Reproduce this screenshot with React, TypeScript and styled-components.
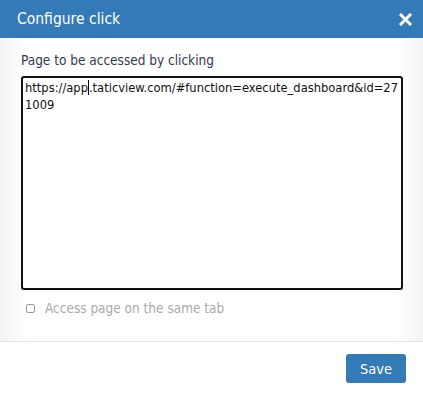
import React from 'react';
import styled, { createGlobalStyle } from 'styled-components';

const GlobalStyle = createGlobalStyle`
  html, body {
    margin: 0;
    padding: 0;
    background: #fff;
  }
  body {
    font-family: "DejaVu Sans Condensed", "DejaVu Sans", sans-serif;
    font-stretch: condensed;
  }
`;

const Modal = styled.div`
  width: 423px;
  height: 397px;
  display: flex;
  flex-direction: column;
  background: #fff;
`;

const Header = styled.header`
  height: 38px;
  background: #337ab7;
  display: flex;
  align-items: center;
  justify-content: space-between;
  padding: 0 11px 0 17px;
  box-sizing: border-box;
`;

const Title = styled.h4`
  margin: 0;
  color: #fff;
  font-size: 15.5px;
  font-weight: normal;
`;

const CloseButton = styled.button`
  background: none;
  border: none;
  padding: 0;
  width: 14px;
  height: 14px;
  display: flex;
  align-items: center;
  justify-content: center;
  cursor: pointer;
`;

const Body = styled.div`
  height: 304px;
  box-sizing: border-box;
  padding: 14px 20px 0 21px;
  border-bottom: 1px solid #e5e5e5;
  background: linear-gradient(
    to right,
    #f4f4f4 0,
    #fff 28px,
    #fff calc(100% - 28px),
    #f4f4f4 100%
  );
  display: flex;
  flex-direction: column;
`;

const Label = styled.label`
  color: #333a4f;
  font-size: 13.5px;
  line-height: 16px;
  margin-bottom: 8px;
`;

const UrlBox = styled.div`
  height: 214px;
  box-sizing: border-box;
  border: 2px solid #111;
  border-radius: 3px;
  background: #fff;
  padding: 1px 2px;
  font-size: 12.8px;
  line-height: 17px;
  color: #111;
  word-break: break-all;
  white-space: pre-wrap;
`;

const Caret = styled.span`
  display: inline-block;
  width: 1px;
  height: 15px;
  vertical-align: -3px;
  background: #000;
`;

const CheckRow = styled.label`
  display: flex;
  align-items: center;
  gap: 10px;
  margin: 10px 0 0 5px;
  color: #aaa;
  font-size: 13.5px;
`;

const Check = styled.span`
  width: 9px;
  height: 9px;
  box-sizing: border-box;
  border: 1px solid #999;
  border-radius: 2px;
  background: #fff;
`;

const Footer = styled.footer`
  flex: 1;
  display: flex;
  justify-content: flex-end;
  align-items: flex-start;
  padding: 12px 17px 0 0;
`;

const SaveButton = styled.button`
  width: 60px;
  height: 29px;
  border: none;
  border-radius: 3px;
  background: #337ab7;
  color: #fff;
  font-family: inherit;
  font-stretch: inherit;
  font-size: 14.5px;
  cursor: pointer;
`;

export default function App() {
  return (
    <>
      <GlobalStyle />
      <Modal>
        <Header>
          <Title>Configure click</Title>
          <CloseButton aria-label="Close">
            <svg width="13" height="13" viewBox="0 0 13 13">
              <path d="M2 2 L11 11 M11 2 L2 11" stroke="#fff" strokeWidth="3" strokeLinecap="square" />
            </svg>
          </CloseButton>
        </Header>
        <Body>
          <Label>Page to be accessed by clicking</Label>
          <UrlBox>
            https://app<Caret />.taticview.com/#function=execute_dashboard&amp;id=271009
          </UrlBox>
          <CheckRow>
            <Check />
            Access page on the same tab
          </CheckRow>
        </Body>
        <Footer>
          <SaveButton>Save</SaveButton>
        </Footer>
      </Modal>
    </>
  );
}
